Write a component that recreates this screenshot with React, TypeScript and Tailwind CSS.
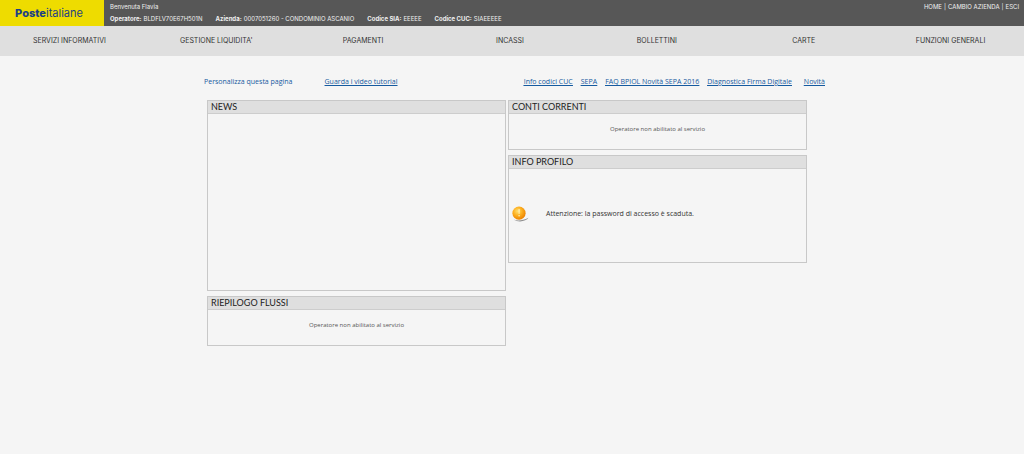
import type { ReactNode } from "react";

const menu = [
  "SERVIZI INFORMATIVI",
  "GESTIONE LIQUIDITA'",
  "PAGAMENTI",
  "INCASSI",
  "BOLLETTINI",
  "CARTE",
  "FUNZIONI GENERALI",
];

const account = [
  ["Operatore:", "BLDFLV70E67H501N"],
  ["Azienda:", "0007051260 - CONDOMINIO ASCANIO"],
  ["Codice SIA:", "EEEEE"],
  ["Codice CUC:", "SIAEEEEE"],
];

function Panel({ title, children, body }: { title: string; children?: ReactNode; body: string }) {
  return (
    <section className="border border-[#c8c8c8]">
      <h2 className="border-b border-[#cdcdcd] bg-[#dfdfdf] px-[3px] font-['Lato',sans-serif] text-[9px] leading-3 text-[#222]">{title}</h2>
      <div className={body}>{children}</div>
    </section>
  );
}

function WarningIcon() {
  return (
    <svg viewBox="0 0 18 16" className="h-4 w-[18px]" aria-hidden="true">
      <defs>
        <radialGradient id="ball" cx="0.4" cy="0.35" r="0.65">
          <stop offset="0" stopColor="#ffdf70" />
          <stop offset="0.5" stopColor="#fdb020" />
          <stop offset="1" stopColor="#ec8200" />
        </radialGradient>
      </defs>
      <path d="M1.500 13.500c4 1.700 9 1.300 15-1.700-2 3.400-10 5.200-15 1.700z" fill="#8f8f8f" />
      <circle cx="7" cy="7.200" r="6.600" fill="url(#ball)" />
      <path d="M6.300 3.200h1.600l-.4 4.800h-.8z" fill="#fff0b8" />
      <circle cx="7.100" cy="9.800" r="0.800" fill="#fff0b8" />
    </svg>
  );
}

export default function App() {
  return (
    <div className="min-h-screen overflow-x-hidden bg-[#f5f5f5] font-['Inter',sans-serif] text-[7px] leading-3 text-[#333]">
      <header className="flex h-[26px] bg-[#575757] text-[6px] text-[#f0f0f0]">
        <a href="#" className="flex w-[104px] shrink-0 items-center justify-center bg-[#eedc00] pr-[6px] text-[11px] text-[#1d3f85]">
          <span className="font-extrabold">Poste</span>
          <span>italiane</span>
        </a>
        <div className="flex grow flex-col pl-[6px] pt-px">
          <p>Benvenuta Flavia</p>
          <dl className="flex gap-[13px] leading-[11px]">
            {account.map(([label, value]) => (
              <div key={label} className="flex gap-[2px]">
                <dt className="font-bold">{label}</dt>
                <dd>{value}</dd>
              </div>
            ))}
          </dl>
        </div>
        <div className="flex gap-[2px] pr-[5px] pt-px">
          <a href="#">HOME</a>
          <span>|</span>
          <a href="#">CAMBIO AZIENDA</a>
          <span>|</span>
          <a href="#">ESCI</a>
        </div>
      </header>
      <nav className="h-[30px] bg-[#dfdfdf] pt-[9px]">
        <ul className="-ml-1 grid grid-cols-7 text-center">
          {menu.map((item) => (
            <li key={item}>
              <a href="#">{item}</a>
            </li>
          ))}
        </ul>
      </nav>
      <main className="mx-auto max-w-[640px] pl-3 pr-[7px] pt-5 font-['Open_Sans',sans-serif]">
        <div className="flex text-[#155a9f]">
          <a href="#">Personalizza questa pagina</a>
          <a href="#" className="ml-8 underline">Guarda i video tutorial</a>
          <div className="ml-auto flex gap-2 underline">
            <a href="#">Info codici CUC</a>
            <a href="#">SEPA</a>
            <a href="#">FAQ BPIOL Novità SEPA 2016</a>
            <a href="#">Diagnostica Firma Digitale</a>
            <a href="#" className="ml-1">Novità</a>
          </div>
        </div>
        <div className="ml-[3px] mr-[18px] mt-3 grid grid-cols-2 items-start gap-x-[2px]">
          <div className="grid gap-[5px]">
            <Panel title="NEWS" body="h-[176px]" />
            <Panel title="RIEPILOGO FLUSSI" body="h-[35px] pt-[9px] text-center text-[6px] text-[#555]">
              Operatore non abilitato al servizio
            </Panel>
          </div>
          <div className="grid gap-[5px]">
            <Panel title="CONTI CORRENTI" body="h-[35px] pt-[9px] text-center text-[6px] text-[#555]">
              Operatore non abilitato al servizio
            </Panel>
            <Panel title="INFO PROFILO" body="flex h-[93px] items-center gap-4 px-[3px] pb-1">
              <WarningIcon />
              <p>Attenzione: la password di accesso è scaduta.</p>
            </Panel>
          </div>
        </div>
      </main>
    </div>
  );
}
